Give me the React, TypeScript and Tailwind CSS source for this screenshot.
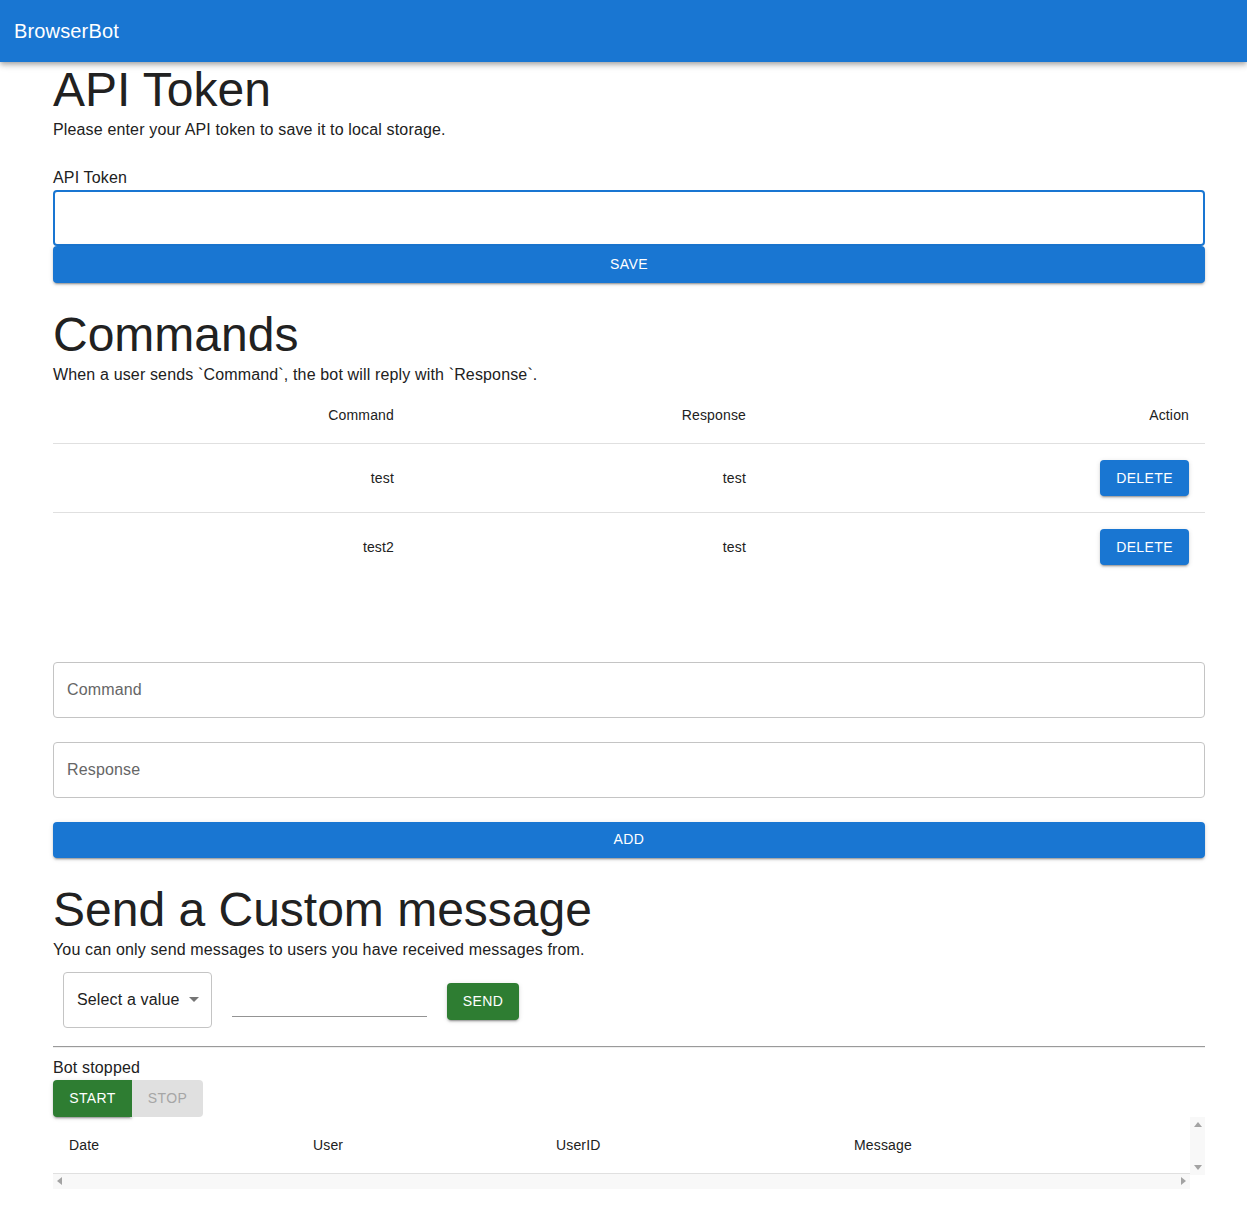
import React from "react";

const commands = [
  { command: "test", response: "test" },
  { command: "test2", response: "test" },
];

function BlueButton({ children, className = "" }: { children: React.ReactNode; className?: string }) {
  return (
    <button
      className={
        "bg-[#1976d2] text-white text-[14px] font-medium uppercase tracking-[0.4px] rounded-[4px] shadow-[0_3px_1px_-2px_rgba(0,0,0,0.2),0_2px_2px_0_rgba(0,0,0,0.14),0_1px_5px_0_rgba(0,0,0,0.12)] " +
        className
      }
    >
      {children}
    </button>
  );
}

function Arrow({ dir }: { dir: "up" | "down" | "left" | "right" }) {
  const map = {
    up: "border-l-[4px] border-r-[4px] border-b-[5px] border-l-transparent border-r-transparent border-b-[#a3a3a3]",
    down: "border-l-[4px] border-r-[4px] border-t-[5px] border-l-transparent border-r-transparent border-t-[#a3a3a3]",
    left: "border-t-[4px] border-b-[4px] border-r-[5px] border-t-transparent border-b-transparent border-r-[#a3a3a3]",
    right: "border-t-[4px] border-b-[4px] border-l-[5px] border-t-transparent border-b-transparent border-l-[#a3a3a3]",
  };
  return <div className={"w-0 h-0 " + map[dir]} />;
}

export default function App() {
  return (
    <div className="min-h-[1212px] bg-white text-[#212121] tracking-[0.15px]" style={{ fontFamily: '"Liberation Sans", Arial, sans-serif' }}>
      {/* App bar */}
      <header className="h-[62px] bg-[#1976d2] flex items-center px-[14px] shadow-[0_2px_4px_-1px_rgba(0,0,0,0.2),0_4px_5px_0_rgba(0,0,0,0.14),0_1px_10px_0_rgba(0,0,0,0.12)] relative z-10">
        <span className="text-white text-[20px]">BrowserBot</span>
      </header>

      <main className="ml-[53px] w-[1152px]">
        {/* API token */}
        <h1 className="text-[48px] leading-[56px] tracking-normal">API Token</h1>
        <p className="text-[16px] leading-[24px]">Please enter your API token to save it to local storage.</p>
        <label className="block mt-[24px] text-[16px] leading-[24px]">API Token</label>
        <div className="h-[56px] border-2 border-[#1976d2] rounded-[4px]" />
        <BlueButton className="w-full h-[37px]">Save</BlueButton>

        {/* Commands */}
        <h1 className="mt-[24px] text-[48px] leading-[56px] tracking-normal">Commands</h1>
        <p className="text-[16px] leading-[24px]">When a user sends `Command`, the bot will reply with `Response`.</p>
        <table className="w-full text-[14px] leading-[24px] border-collapse">
          <thead>
            <tr className="border-b border-[#e0e0e0]">
              <th className="w-[357px] p-4 text-right font-normal">Command</th>
              <th className="w-[352px] p-4 text-right font-normal">Response</th>
              <th className="p-4 text-right font-normal">Action</th>
            </tr>
          </thead>
          <tbody>
            {commands.map((c, i) => (
              <tr key={i} className={i < commands.length - 1 ? "border-b border-[#e0e0e0]" : ""}>
                <td className="h-[69px] px-4 py-0 text-right">{c.command}</td>
                <td className="h-[69px] px-4 py-0 text-right">{c.response}</td>
                <td className="h-[69px] px-4 py-0 text-right">
                  <BlueButton className="h-[36px] px-4 align-middle">Delete</BlueButton>
                </td>
              </tr>
            ))}
          </tbody>
        </table>

        <div className="mt-[80px] flex flex-col gap-6">
          <div className="h-[56px] border border-[#c4c4c4] rounded-[4px] flex items-center px-[13px] text-[16px] text-[#666]">Command</div>
          <div className="h-[56px] border border-[#c4c4c4] rounded-[4px] flex items-center px-[13px] text-[16px] text-[#666]">Response</div>
          <BlueButton className="w-full h-[36px]">Add</BlueButton>
        </div>

        {/* Custom message */}
        <h1 className="mt-[24px] text-[48px] leading-[56px] tracking-normal">Send a Custom message</h1>
        <p className="text-[16px] leading-[24px]">You can only send messages to users you have received messages from.</p>
        <div className="mt-[10px] flex items-start">
          <div className="ml-[10px] w-[149px] h-[56px] border border-[#c4c4c4] rounded-[4px] flex items-center pl-[13px] text-[16px]">
            <span>Select a value</span>
            <span className="ml-[9px] w-0 h-0 border-l-[5px] border-r-[5px] border-t-[5px] border-l-transparent border-r-transparent border-t-[#757575]" />
          </div>
          <div className="ml-[20px] w-[195px] h-[45px] border-b border-[#949494]" />
          <button className="ml-[20px] mt-[11px] h-[37px] w-[72px] bg-[#2e7d32] text-white text-[14px] font-medium uppercase tracking-[0.4px] rounded-[4px] shadow-[0_3px_1px_-2px_rgba(0,0,0,0.2),0_2px_2px_0_rgba(0,0,0,0.14),0_1px_5px_0_rgba(0,0,0,0.12)]">
            Send
          </button>
        </div>

        <div className="mt-[18px] border-t border-[#9a9a9a] border-b border-b-[#eeeeee]" />

        {/* Bot control */}
        <p className="mt-[8px] text-[16px] leading-[24px]">Bot stopped</p>
        <div className="flex">
          <button className="h-[37px] w-[79px] bg-[#2e7d32] text-white text-[14px] font-medium uppercase tracking-[0.4px] rounded-l-[4px] shadow-[0_3px_1px_-2px_rgba(0,0,0,0.2),0_2px_2px_0_rgba(0,0,0,0.14),0_1px_5px_0_rgba(0,0,0,0.12)]">
            Start
          </button>
          <button className="h-[37px] w-[71px] bg-[#e0e0e0] text-[#a6a6a6] text-[14px] font-medium uppercase tracking-[0.4px] rounded-r-[4px]">
            Stop
          </button>
        </div>

        {/* Messages table */}
        <div className="flex">
          <div className="flex-1">
            <div className="h-[57px] pt-[2px] border-b border-[#e0e0e0] flex items-center text-[14px]">
              <div className="w-[244px] pl-4">Date</div>
              <div className="w-[243px] pl-4">User</div>
              <div className="w-[298px] pl-4">UserID</div>
              <div className="pl-4">Message</div>
            </div>
            <div className="h-[15px] bg-[#f8f8f8] flex items-center justify-between px-[4px]">
              <Arrow dir="left" />
              <Arrow dir="right" />
            </div>
          </div>
          <div className="w-[15px] flex flex-col">
            <div className="h-[58px] bg-[#f8f8f8] flex flex-col items-center justify-between py-[5px]">
              <Arrow dir="up" />
              <Arrow dir="down" />
            </div>
            <div className="h-[14px] bg-white" />
          </div>
        </div>
      </main>
    </div>
  );
}
